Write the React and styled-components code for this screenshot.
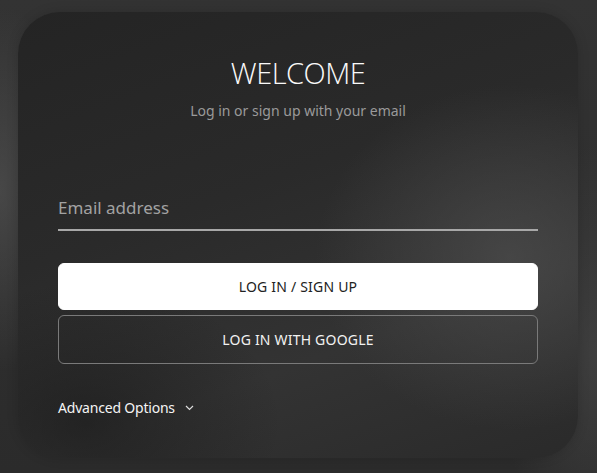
import styled, { createGlobalStyle } from 'styled-components';

const GlobalStyle = createGlobalStyle`
    html, body {
        margin: 0;
        padding: 0;
        height: 100%;
    }
    body {
        font-family: "Noto Sans", "Open Sans", Arial, sans-serif;
        background: #2c2c2c;
    }
`;

const Page = styled.div`
    width: 597px;
    height: 473px;
    box-sizing: border-box;
    padding: 12px 19px 15px 18px;
    background:
        radial-gradient(ellipse 120px 260px at 0% 40%, rgba(90, 90, 90, 0.55), transparent 70%),
        radial-gradient(ellipse 140px 300px at 100% 75%, rgba(80, 80, 80, 0.5), transparent 70%),
        linear-gradient(180deg, #333 0%, #2b2b2b 100%);
`;

const Card = styled.div`
    height: 100%;
    box-sizing: border-box;
    border-radius: 42px;
    padding: 46px 40px 0 40px;
    display: flex;
    flex-direction: column;
    background:
        radial-gradient(ellipse 260px 230px at 88% 55%, rgba(78, 78, 78, 0.7), transparent 75%),
        radial-gradient(ellipse 280px 200px at 12% 92%, rgba(20, 20, 20, 0.5), transparent 70%),
        linear-gradient(160deg, #242424 0%, #2a2a2a 40%, #333 70%, #2a2a2a 100%);
    box-shadow: 0 0 12px rgba(0, 0, 0, 0.15);
`;

const Title = styled.h1`
    margin: 0;
    text-align: center;
    font-family: "Open Sans", "Noto Sans", sans-serif;
    font-weight: 300;
    font-size: 29px;
    letter-spacing: -0.5px;
    color: #fafafa;
    line-height: 30px;
`;

const Subtitle = styled.p`
    margin: 14px 0 0 0;
    text-align: center;
    font-size: 14px;
    color: #9a9a9a;
    line-height: 18px;
`;

const EmailInput = styled.input`
    margin-top: 77px;
    width: 100%;
    box-sizing: border-box;
    background: transparent;
    border: none;
    border-bottom: 2px solid #a8a8a8;
    outline: none;
    padding: 0 0 10px 0;
    font-family: inherit;
    font-size: 17px;
    line-height: 22px;
    color: #eee;

    &::placeholder {
        color: #a2a2a2;
    }
`;

const Button = styled.button`
    width: 100%;
    height: ${p => p.$primary ? '47px' : '49px'};
    margin-top: ${p => p.$primary ? '32px' : '5px'};
    box-sizing: border-box;
    border-radius: 6px;
    border: 1px solid ${p => p.$primary ? '#fff' : '#7a7a7a'};
    background: ${p => p.$primary ? '#fff' : 'transparent'};
    color: ${p => p.$primary ? '#222' : '#f2f2f2'};
    font-family: inherit;
    font-size: 14px;
    letter-spacing: 0.2px;
    cursor: pointer;
`;

const Advanced = styled.div`
    margin-top: 34px;
    display: flex;
    align-items: center;
    gap: 10px;
    font-size: 14px;
    letter-spacing: -0.2px;
    color: #f4f4f4;
    cursor: pointer;
`;

function App() {
    return (
        <Page>
            <GlobalStyle />
            <Card>
                <Title>WELCOME</Title>
                <Subtitle>Log in or sign up with your email</Subtitle>
                <EmailInput type="email" placeholder="Email address" />
                <Button $primary>LOG IN / SIGN UP</Button>
                <Button>LOG IN WITH GOOGLE</Button>
                <Advanced>
                    Advanced Options
                    <svg width="9" height="6" viewBox="0 0 9 6" fill="none">
                        <path d="M1 1l3.5 3.5L8 1" stroke="#ddd" strokeWidth="1.2" />
                    </svg>
                </Advanced>
            </Card>
        </Page>
    );
}

export default App;
